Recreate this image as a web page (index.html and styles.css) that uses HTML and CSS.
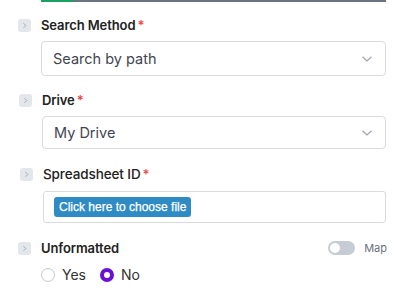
FILE: index.html
```html
<!DOCTYPE html>
<html>
<head>
<meta charset="utf-8">
<link rel="stylesheet" href="styles.css">
</head>
<body>
<div class="page">
  <div class="progress"><div class="progress-fill"></div></div>

  <div class="field">
    <div class="head">
      <span class="toggle-arrow"><svg width="13" height="13" viewBox="0 0 13 13"><path d="M5.5 4.2 L7.8 6.5 L5.5 8.8" fill="none" stroke="#9aa3ad" stroke-width="0.9"/></svg></span>
      <span class="label">Search Method<span class="req">*</span></span>
    </div>
    <div class="body">
      <div class="select h34"><span>Search by path</span><svg class="chev" width="12" height="8" viewBox="0 0 12 8"><path d="M1.5 1.8 L6 6 L10.5 1.8" fill="none" stroke="#9ca3af" stroke-width="1.2"/></svg></div>
    </div>
  </div>

  <div class="field">
    <div class="head shift1">
      <span class="toggle-arrow"><svg width="13" height="13" viewBox="0 0 13 13"><path d="M5.5 4.2 L7.8 6.5 L5.5 8.8" fill="none" stroke="#9aa3ad" stroke-width="0.9"/></svg></span>
      <span class="label">Drive<span class="req">*</span></span>
    </div>
    <div class="body shift1">
      <div class="select h33"><span>My Drive</span><svg class="chev" width="12" height="8" viewBox="0 0 12 8"><path d="M1.5 1.8 L6 6 L10.5 1.8" fill="none" stroke="#9ca3af" stroke-width="1.2"/></svg></div>
    </div>
  </div>

  <div class="field third">
    <div class="head shift2">
      <span class="toggle-arrow"><svg width="13" height="13" viewBox="0 0 13 13"><path d="M5.5 4.2 L7.8 6.5 L5.5 8.8" fill="none" stroke="#9aa3ad" stroke-width="0.9"/></svg></span>
      <span class="label light">Spreadsheet ID<span class="req">*</span></span>
    </div>
    <div class="body shift2 tight">
      <div class="filebox"><button class="file-btn">Click here to choose file</button></div>
    </div>
  </div>

  <div class="field last">
    <div class="head">
      <span class="toggle-arrow"><svg width="13" height="13" viewBox="0 0 13 13"><path d="M5.5 4.2 L7.8 6.5 L5.5 8.8" fill="none" stroke="#9aa3ad" stroke-width="0.9"/></svg></span>
      <span class="label">Unformatted</span>
      <span class="map"><span class="switch"><span class="knob"></span></span><span class="map-text">Map</span></span>
    </div>
    <div class="body radios">
      <label class="radio"><span class="circle"></span>Yes</label>
      <label class="radio on"><span class="circle"></span>No</label>
    </div>
  </div>
</div>
</body>
</html>
```

FILE: styles.css
```css
* { box-sizing: border-box; }
html, body { margin: 0; padding: 0; background: #fff; }
body { font-family: Inter, "Noto Sans", sans-serif; color: #1f2328; }
.page { width: 400px; height: 292px; overflow: hidden; padding-left: 18px; }

.progress { margin-left: 23px; width: 345px; height: 2px; background: #6b7280; display: flex; }
.progress-fill { width: 32px; height: 2px; background: #1aa260; }

.field { margin-top: 15px; }
.field + .field { margin-top: 16px; }
.field.third { margin-top: 17px; }
.field.last { margin-top: 17px; }
.head { display: flex; align-items: center; height: 16px; }
.toggle-arrow { width: 13px; height: 13px; border-radius: 3px; background: #e3e6ea; display: flex; margin-right: 10px; }
.label { font-size: 13px; font-weight: 600; color: #222; letter-spacing: -0.1px; }
.label.light { font-weight: 500; font-size: 13.5px; }
.req { color: #ef4444; margin-left: 2px; }

.body { margin-left: 23px; width: 345px; margin-top: 8px; }
.body.tight { margin-top: 9px; }
.shift1 { margin-left: 1px; }
.body.shift1 { margin-left: 24px; width: 344px; }
.shift2 { margin-left: 2px; }
.body.shift2 { margin-left: 25px; width: 343px; }

.select { border: 1px solid #d9dbde; border-radius: 4px; display: flex; align-items: center; justify-content: space-between; padding: 0 12px 0 11px; font-size: 14.5px; color: #3f4650; }
.h34 { height: 35px; }
.h33 { height: 33px; }

.filebox { height: 32px; border: 1px solid #d9dbde; border-radius: 3px; display: flex; align-items: center; padding-left: 10px; }
.file-btn { font-family: "Liberation Sans", Arial, sans-serif; font-size: 12px; color: #fff; background: #2f8bc3; border: 0; border-radius: 3px; height: 20px; padding: 0 5px; white-space: nowrap; -webkit-text-stroke: 0.25px #fff; }

.map { margin-left: auto; margin-right: 13px; display: flex; align-items: center; }
.switch { width: 27px; height: 14px; border-radius: 7px; background: #c5ccd4; display: flex; align-items: center; padding-left: 2px; }
.knob { width: 10px; height: 10px; border-radius: 50%; background: #fff; }
.map-text { font-size: 11px; color: #6b7280; margin-left: 9px; }

.radios { display: flex; align-items: center; margin-top: 10px; font-size: 14px; color: #333; }
.radio { display: flex; align-items: center; margin-right: 14px; }
.circle { width: 14px; height: 14px; border-radius: 50%; border: 1px solid #c4c7cc; margin-right: 7px; background: #fff; }
.radio.on .circle { border: 4px solid #6a11d6; }
```
